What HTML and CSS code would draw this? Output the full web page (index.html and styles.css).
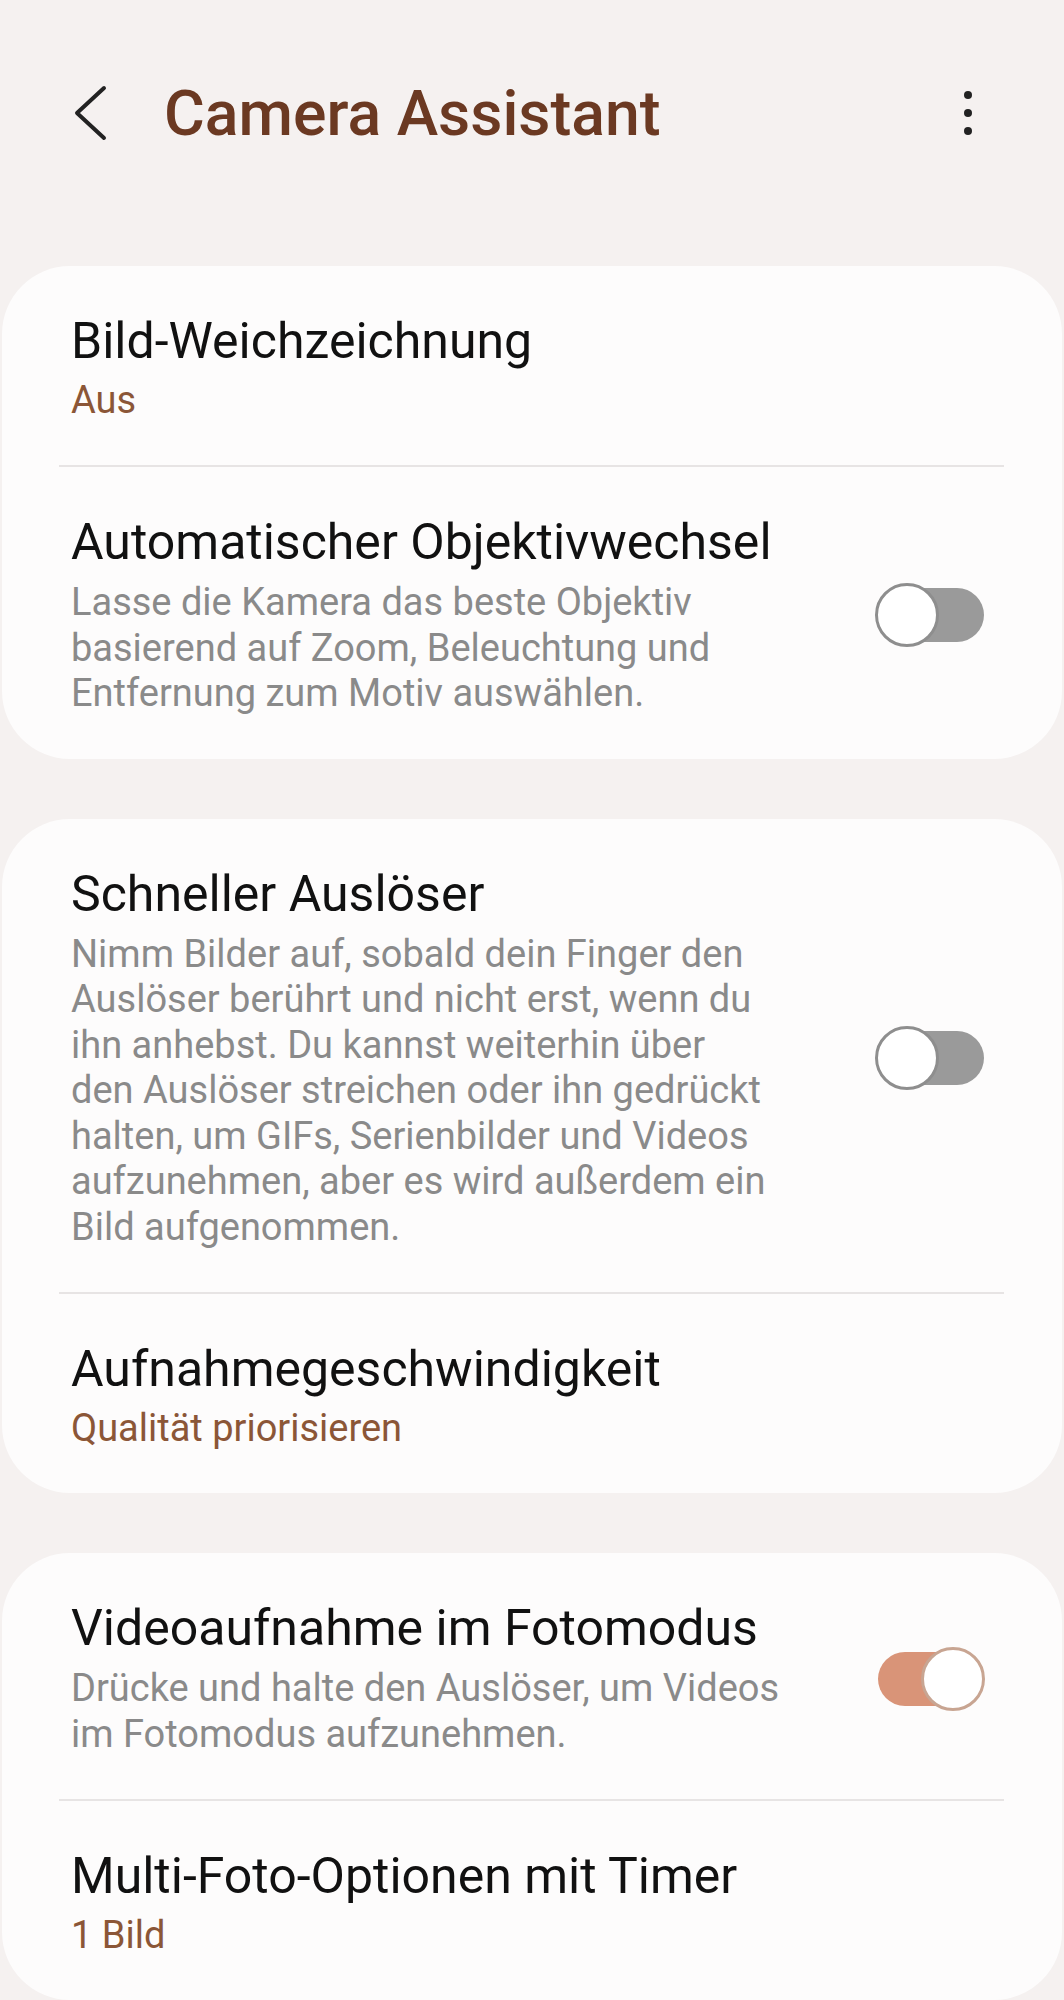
FILE: index.html
```html
<!DOCTYPE html>
<html lang="de">
<head>
    <meta charset="UTF-8">
    <meta name="viewport" content="width=device-width, initial-scale=1.0">
    <title>Camera Assistant</title>
    <link rel="stylesheet" href="styles.css">
</head>
<body>

    <header class="app-bar">
        <button class="back" aria-label="Zurück">
            <svg width="34" height="56" viewBox="0 0 34 56">
                <polyline points="30,3 3,28 30,53" fill="none" stroke="#222" stroke-width="4" stroke-linecap="round" stroke-linejoin="round"/>
            </svg>
        </button>
        <h1>Camera Assistant</h1>
        <button class="more" aria-label="Mehr">
            <span></span><span></span><span></span>
        </button>
    </header>

    <main class="list">
        <section class="card">
            <div class="row">
                <div class="text">
                    <div class="title">Bild-Weichzeichnung</div>
                    <div class="value">Aus</div>
                </div>
            </div>
            <div class="divider"></div>
            <div class="row">
                <div class="text">
                    <div class="title">Automatischer Objektivwechsel</div>
                    <div class="desc">Lasse die Kamera das beste Objektiv<br>basierend auf Zoom, Beleuchtung und<br>Entfernung zum Motiv auswählen.</div>
                </div>
                <div class="switch"><div class="track"></div><div class="knob"></div></div>
            </div>
        </section>

        <section class="card">
            <div class="row">
                <div class="text">
                    <div class="title">Schneller Auslöser</div>
                    <div class="desc">Nimm Bilder auf, sobald dein Finger den<br>Auslöser berührt und nicht erst, wenn du<br>ihn anhebst. Du kannst weiterhin über<br>den Auslöser streichen oder ihn gedrückt<br>halten, um GIFs, Serienbilder und Videos<br>aufzunehmen, aber es wird außerdem ein<br>Bild aufgenommen.</div>
                </div>
                <div class="switch"><div class="track"></div><div class="knob"></div></div>
            </div>
            <div class="divider"></div>
            <div class="row">
                <div class="text">
                    <div class="title">Aufnahmegeschwindigkeit</div>
                    <div class="value">Qualität priorisieren</div>
                </div>
            </div>
        </section>

        <section class="card">
            <div class="row">
                <div class="text">
                    <div class="title">Videoaufnahme im Fotomodus</div>
                    <div class="desc">Drücke und halte den Auslöser, um Videos<br>im Fotomodus aufzunehmen.</div>
                </div>
                <div class="switch on"><div class="track"></div><div class="knob"></div></div>
            </div>
            <div class="divider"></div>
            <div class="row">
                <div class="text">
                    <div class="title">Multi-Foto-Optionen mit Timer</div>
                    <div class="value">1 Bild</div>
                </div>
            </div>
        </section>
    </main>

</body>
</html>
```

FILE: styles.css
```css
body {
    margin: 0;
    background-color: #f5f1f0;
    font-family: Roboto, "Noto Sans", sans-serif;
    color: #111;
}

button {
    background: none;
    border: none;
    padding: 0;
    cursor: pointer;
}

.app-bar {
    height: 226px;
    display: flex;
    align-items: center;
    padding: 0 90px 0 74px;
}

.back {
    width: 34px;
    height: 56px;
    margin-right: 56px;
}

.back svg {
    display: block;
}

.app-bar h1 {
    flex: 1;
    margin: 0;
    font-size: 62.5px;
    font-weight: 500;
    color: #6b3922;
}

.more {
    display: flex;
    flex-direction: column;
    align-items: center;
    gap: 10px;
    width: 12px;
}

.more span {
    width: 8px;
    height: 8px;
    border-radius: 50%;
    background-color: #222;
}

.list {
    display: flex;
    flex-direction: column;
    gap: 60px;
    padding-top: 40px;
}

.card {
    margin: 0 2px;
    background-color: #fdfcfc;
    border-radius: 68px;
}

.row {
    display: flex;
    align-items: center;
    padding: 47px 77px 42px 69px;
}

.text {
    flex: 1;
}

.title {
    font-size: 50px;
    line-height: 56px;
    color: #111;
}

.value {
    margin-top: 8px;
    font-size: 38px;
    line-height: 46px;
    color: #8b5637;
}

.desc {
    margin-top: 10px;
    font-size: 38px;
    line-height: 45.5px;
    color: #8a8a8a;
}

.divider {
    height: 2px;
    margin: 0 58px 0 57px;
    background-color: #e7e4e4;
}

.switch {
    position: relative;
    width: 110px;
    height: 64px;
    margin-left: 40px;
    flex-shrink: 0;
}

.track {
    position: absolute;
    top: 5px;
    left: 3px;
    right: 1px;
    height: 54px;
    border-radius: 27px;
    background-color: #9a9a9a;
}

.knob {
    position: absolute;
    top: 0;
    left: 0;
    width: 58px;
    height: 58px;
    border-radius: 50%;
    background-color: #fff;
    border: 3px solid #8e8e8e;
}

.switch.on .track {
    background-color: #d99478;
}

.switch.on .knob {
    left: auto;
    right: 0;
    border-color: #c8a592;
}
```
